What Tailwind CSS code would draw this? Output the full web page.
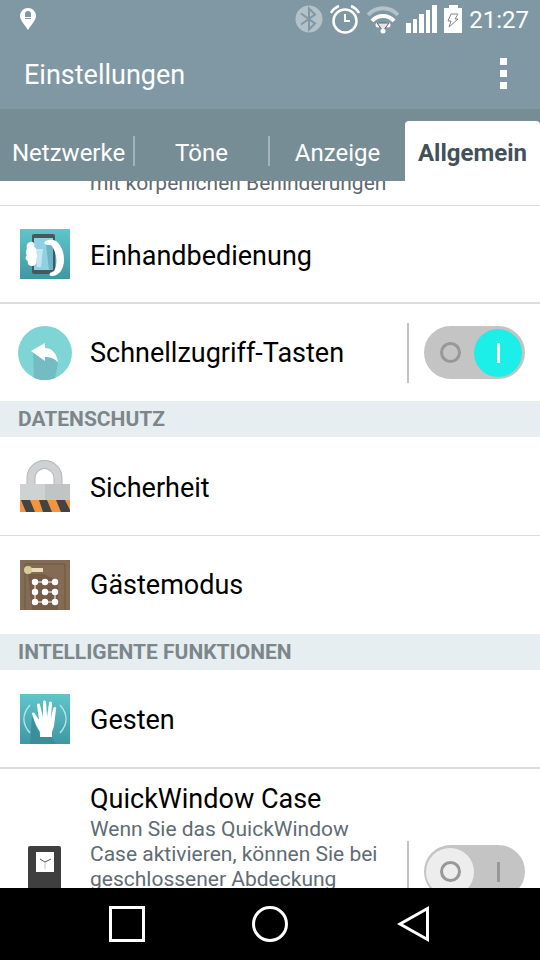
<!DOCTYPE html>
<html lang="de">
<head>
    <meta charset="UTF-8">
    <meta name="viewport" content="width=device-width, initial-scale=1.0">
    <title>Einstellungen</title>
    <script src="https://cdn.jsdelivr.net/npm/@tailwindcss/browser@4"></script>
</head>
<body class="h-screen flex flex-col overflow-hidden bg-white font-[Roboto,sans-serif] text-black">
    <header class="shrink-0 bg-[#8098a3] text-white">
        <!-- status bar -->
        <div class="flex items-center justify-between h-[38px] pl-5 pr-[11px]">
            <svg class="w-4 h-[22px]" viewBox="0 0 16 22">
                <path fill="#fff" d="M8 0a8 8 0 0 0-8 8c0 4 4 8 8 14 4-6 8-10 8-14a8 8 0 0 0-8-8z"/>
                <path fill="#8098a3" d="M5 9V6a3 3 0 0 1 6 0v3zM5 10h6v1H5z"/>
            </svg>
            <div class="flex items-center gap-[7px]">
                <svg class="w-7 h-7" viewBox="0 0 28 28">
                    <circle cx="14" cy="14" r="13.5" fill="#b3c1c8"/>
                    <path d="M6 8.500l14 10-6 6V3.500l6 6-14 10" fill="none" stroke="#8098a3" stroke-width="2"/>
                </svg>
                <svg class="w-[30px] h-[30px]" viewBox="0 0 30 30" fill="none" stroke="#fff">
                    <circle cx="15" cy="17" r="11.500" stroke-width="2.500"/>
                    <path d="M15 10v7h5" stroke-width="2"/>
                    <path d="M1 9a16 16 0 0 1 8-7M29 9a16 16 0 0 0-8-7" stroke-width="2.500"/>
                </svg>
                <svg class="w-8 h-[30px]" viewBox="0 0 32 30" fill="none">
                    <path d="M1 11a20 20 0 0 1 30 0" stroke="#b3c1c8" stroke-width="4"/>
                    <path d="M5 17a14.500 14.500 0 0 1 22 0" stroke="#fff" stroke-width="4"/>
                    <circle cx="11" cy="21" r="2.500" fill="#fff"/>
                    <circle cx="21" cy="21" r="2.500" fill="#fff"/>
                    <path d="M10 19h12l-6 8z" fill="#dfe5e8" stroke="#5c6b72"/>
                    <circle cx="16" cy="27" r="2.500" fill="#fff"/>
                </svg>
                <svg class="w-[31px] h-7" viewBox="0 0 31 28" fill="#fff">
                    <path d="M0 18h5v10H0zM7 14h4v14H7zM13 9h5v19h-5zM20 5h4v23h-4zM26 0h5v28h-5z"/>
                </svg>
                <svg class="w-[18px] h-7" viewBox="0 0 18 28">
                    <path fill="#fff" d="M5 0h9v3h4v25H0V3h5z"/>
                    <path fill="none" stroke="#7d8a90" d="M7 9h7l-3 5h3L5 22l2-6H4z"/>
                </svg>
                <span class="text-[24px] leading-[38px] pt-0.5">21:27</span>
            </div>
        </div>
        <!-- title bar -->
        <div class="flex items-center justify-between h-[71px] pl-6 pr-7">
            <h1 class="pt-1 text-[27px]">Einstellungen</h1>
            <button type="button" aria-label="Menü" class="flex flex-col gap-[5px] px-[5px]">
                <span class="w-[7px] h-[7px] bg-white"></span>
                <span class="w-[7px] h-[7px] bg-white"></span>
                <span class="w-[7px] h-[7px] bg-white"></span>
            </button>
        </div>
        <!-- tabs -->
        <nav class="grid grid-cols-4 h-[72px] pt-3 bg-[#778d96] text-[24px]">
            <a href="#netzwerke" class="flex items-center justify-between pl-3">
                <span class="pt-1">Netzwerke</span>
                <span class="w-0.5 h-[30px] bg-[#a3b3ba]"></span>
            </a>
            <a href="#toene" class="flex items-center">
                <span class="flex-1 pt-1 text-center">Töne</span>
                <span class="w-0.5 h-[30px] bg-[#a3b3ba]"></span>
            </a>
            <a href="#anzeige" class="flex items-center justify-center pt-1">Anzeige</a>
            <a href="#allgemein" class="flex items-center justify-center pt-1 rounded-t bg-white font-bold text-[#43525a]">Allgemein</a>
        </nav>
    </header>

    <main class="flex-1 min-h-0 overflow-hidden text-[27px]">
        <div class="flex items-end h-[25px] pl-[90px] pb-[10px] border-b border-[#dcdcdc]">
            <p class="text-[21px] leading-6 text-[#5f686c]">mit körperlichen Behinderungen</p>
        </div>
        <div class="flex items-center gap-5 h-[98px] px-5 border-b-2 border-[#dcdcdc]">
            <svg class="w-[50px] h-[50px]" viewBox="0 0 50 50">
                <defs>
                    <linearGradient id="teal" x1="0" y1="0" x2="0" y2="1">
                        <stop offset="0" stop-color="#5fc6ca"/>
                        <stop offset="1" stop-color="#3f97a3"/>
                    </linearGradient>
                </defs>
                <path fill="url(#teal)" d="M0 0h50v50H0z"/>
                <rect x="12" y="5" width="23" height="40" rx="2" fill="#4b5659"/>
                <path fill="#8fd0e3" d="M14 9h19v32H14z"/>
                <path fill="#6db4c6" d="M26 15l7 2v24h-4z"/>
                <path fill="#c4e6ee" d="M15 20h8l-2 18h-4z"/>
                <path fill="#fff" d="M10 13c4-1 5 2 4 5 3 1 3 4 2 6 2 2 1 5 0 6 1 3 0 7-4 7-3 0-5-2-4-5-3-1-3-4-1-6-2-2-1-5 0-6-1-3 0-6 3-7z"/>
                <path fill="#fff" d="M24 14c2-4 8-4 12-2 6 5 8 12 8 19 0 9-5 16-12 16-2 0-3-1-2-3l4-2c2-3 3-9 2-15-1-5-3-9-5-11-3 0-6 0-7-2z"/>
            </svg>
            <span class="pt-1">Einhandbedienung</span>
        </div>
        <div class="flex items-center h-[97px] pl-[18px] pr-[15px]">
            <svg class="w-[54px] h-[54px]" viewBox="0 0 54 54">
                <circle cx="27" cy="27" r="27" fill="#7fd5d6"/>
                <path fill="#73bcc1" d="M15 27c8 3 18 1 25 10l-3 15a27 27 0 0 1-21 0z"/>
                <path fill="#fff" d="M13 25l14-8v5c7 0 12 6 13 14-4-4-8-5-13-5v4z"/>
            </svg>
            <label for="quickkeys" class="flex-1 pt-0.5 pl-[18px]">Schnellzugriff-Tasten</label>
            <span class="w-0.5 h-[60px] mr-[15px] bg-[#c4c4c4]"></span>
            <span class="relative w-[101px] h-[53px]">
                <input id="quickkeys" type="checkbox" checked class="peer block appearance-none w-full h-full rounded-full bg-[#c4c4c4]">
                <span class="absolute top-[3px] left-0.5 w-12 h-12 rounded-full bg-[#ededed] pointer-events-none peer-checked:left-[50px] peer-checked:bg-[#1ceee8]"></span>
                <span class="absolute top-4 left-4 w-[21px] h-[21px] rounded-full border-3 border-[#989898] pointer-events-none"></span>
                <span class="absolute top-[17px] left-[73px] w-[3px] h-5 bg-[#989898] pointer-events-none peer-checked:bg-white"></span>
            </span>
        </div>

        <h2 class="h-9 pl-[18px] bg-[#e6eef1] text-[21px] leading-9 font-bold text-[#7d868a]">DATENSCHUTZ</h2>
        <div class="flex items-center gap-5 h-[99px] px-5 border-b border-[#dcdcdc]">
            <svg class="w-[50px] h-[52px]" viewBox="0 0 50 52">
                <path d="M11 25V18a13.500 13.500 0 0 1 27 0v7" fill="none" stroke="#b4b6b7" stroke-width="9"/>
                <path d="M11 25V18a13.500 13.500 0 0 1 27 0v7" fill="none" stroke="#cfd1d2" stroke-width="7"/>
                <path fill="#cfd2d3" d="M0 24h50v16H0z"/>
                <path fill="#c1c4c5" d="M25 24h25v16H25z"/>
                <path fill="#f3943f" d="M0 40h50v12H0z"/>
                <path fill="#434343" d="M1 40h9l5 12H6zM19 40h8l5 12h-9zM36 40h9l5 10v2h-9z"/>
            </svg>
            <span class="pt-1">Sicherheit</span>
        </div>
        <div class="flex items-center gap-5 h-[98px] px-5">
            <svg class="w-[50px] h-[50px]" viewBox="0 0 50 50">
                <path fill="#846b55" d="M0 0h50v50H0z"/>
                <path fill="none" stroke="#74593f" d="M5 50V4h40v46"/>
                <path fill="#745c48" d="M8 14h16l14 7v29H12z"/>
                <path fill="#e8ddb5" d="M7 8h16v4H11z"/>
                <circle cx="8" cy="10" r="4" fill="#d8cb9c"/>
                <path fill="none" stroke="#fff" d="M35 22H15v20h20V32H25"/>
                <g fill="#fff">
                    <circle cx="15" cy="22" r="3.200"/><circle cx="25" cy="22" r="3.200"/><circle cx="35" cy="22" r="3.200"/>
                    <circle cx="15" cy="32" r="3.200"/><circle cx="25" cy="32" r="3.200"/><circle cx="35" cy="32" r="3.200"/>
                    <circle cx="15" cy="42" r="3.200"/><circle cx="25" cy="42" r="3.200"/><circle cx="35" cy="42" r="3.200"/>
                </g>
            </svg>
            <span>Gästemodus</span>
        </div>

        <h2 class="h-9 pl-[18px] bg-[#e6eef1] text-[21px] leading-9 font-bold text-[#7d868a]">INTELLIGENTE FUNKTIONEN</h2>
        <div class="flex items-center gap-5 h-[99px] px-5 border-b-2 border-[#dcdcdc]">
            <svg class="w-[50px] h-[50px]" viewBox="0 0 50 50">
                <path fill="url(#teal)" d="M0 0h50v50H0z"/>
                <path fill="#3b8d9a" d="M20 42L12 22l-2 28h26l-5-8z"/>
                <path d="M10 11c-8 9-8 19 0 28M40 11c8 9 8 19 0 28" fill="none" stroke="#b5e4e8" stroke-width="1.500"/>
                <path fill="#fff" d="M20 43v-5l-4-7-4-11c0-2 2-2 3 0l4 6-2-15c0-2 3-2 3 0l3 12V8c0-2 3-2 3 0l1 15 2-14c0-2 3-2 3 0l-1 15 2-9c1-3 4-2 3 0l-2 17-2 6v5z"/>
            </svg>
            <span class="pt-1">Gesten</span>
        </div>
        <div class="flex items-center h-[204px] pl-5 pr-[15px]">
            <svg class="w-[50px] h-[50px]" viewBox="0 0 50 50">
                <rect x="8" y="0" width="33" height="50" rx="2" fill="#3f3f3f"/>
                <path fill="#fff" d="M16 6h18v20H16z"/>
                <path d="M20 13l5 3 6-3" fill="none" stroke="#555"/>
                <path d="M25 16v7" stroke="#e3b9b9"/>
            </svg>
            <div class="flex-1 self-start pt-3 pl-5">
                <label for="quickwindow" class="block leading-9">QuickWindow Case</label>
                <p class="text-[21px] leading-[25px] text-[#5f6c73]">Wenn Sie das QuickWindow<br>Case aktivieren, können Sie bei<br>geschlossener Abdeckung</p>
            </div>
            <span class="w-0.5 h-[60px] mr-[15px] bg-[#c4c4c4]"></span>
            <span class="relative w-[101px] h-[53px]">
                <input id="quickwindow" type="checkbox" class="peer block appearance-none w-full h-full rounded-full bg-[#c4c4c4]">
                <span class="absolute top-[3px] left-0.5 w-12 h-12 rounded-full bg-[#ededed] pointer-events-none peer-checked:left-[50px] peer-checked:bg-[#1ceee8]"></span>
                <span class="absolute top-4 left-4 w-[21px] h-[21px] rounded-full border-3 border-[#989898] pointer-events-none"></span>
                <span class="absolute top-[17px] left-[73px] w-[3px] h-5 bg-[#989898] pointer-events-none peer-checked:bg-white"></span>
            </span>
        </div>
    </main>

    <!-- navigation keys -->
    <footer class="shrink-0 flex items-center justify-between h-[72px] px-[108px] bg-black">
        <button type="button" aria-label="Übersicht">
            <svg class="w-[38px] h-[38px]" viewBox="0 0 38 38" fill="none" stroke="#fff" stroke-width="3"><path d="M2.500 2.500h33v33h-33z"/></svg>
        </button>
        <button type="button" aria-label="Start">
            <svg class="w-[38px] h-[38px]" viewBox="0 0 38 38" fill="none" stroke="#fff" stroke-width="3"><circle cx="19" cy="19" r="16.500"/></svg>
        </button>
        <button type="button" aria-label="Zurück">
            <svg class="w-[38px] h-[38px]" viewBox="0 0 38 38" fill="none" stroke="#fff" stroke-width="3"><path d="M33.500 3.500v31L6 19z"/></svg>
        </button>
    </footer>
</body>
</html>
